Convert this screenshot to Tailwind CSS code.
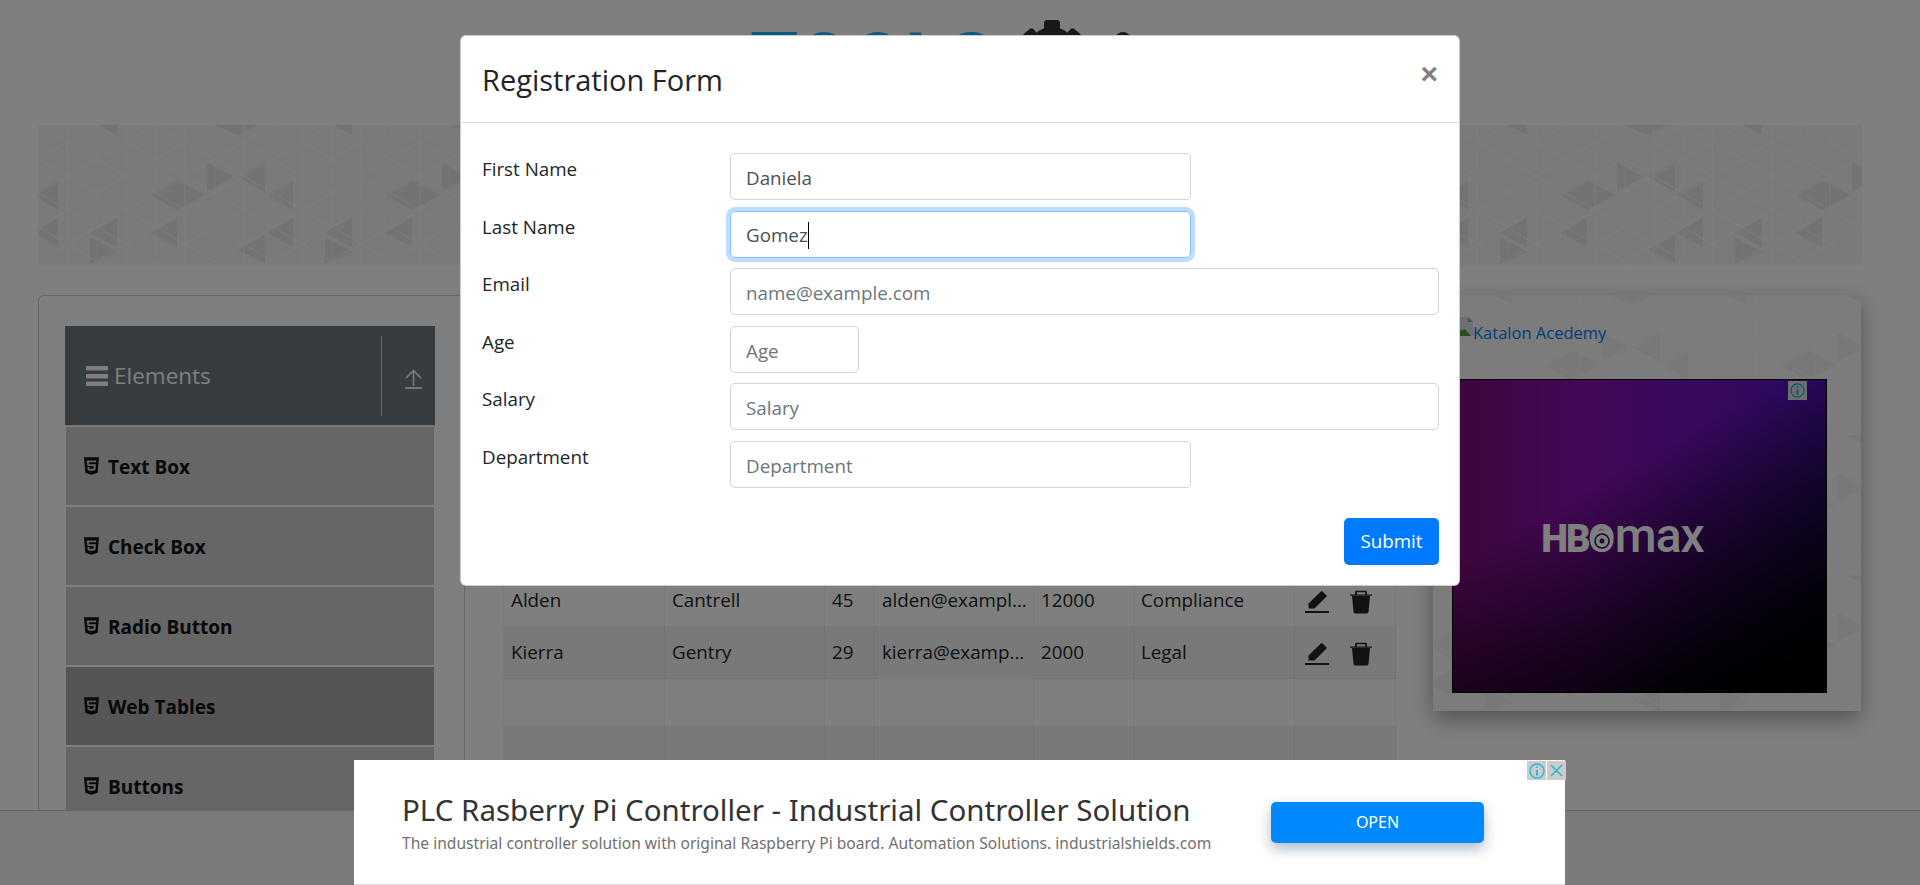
<!DOCTYPE html>
<html lang="en">
<head>
    <meta charset="UTF-8">
    <title>Web Tables - Registration Form</title>
    <script src="https://cdn.jsdelivr.net/npm/@tailwindcss/browser@4"></script>
</head>
<body class="bg-white font-['Open_Sans',sans-serif] text-[#212529]">
<div class="relative w-[1920px] h-[885px] overflow-hidden">

    <!-- shared background pattern -->
    <svg width="0" height="0" class="absolute">
        <defs>
            <pattern id="lattice" width="58.75" height="68" patternUnits="userSpaceOnUse">
                <path d="M0 0L29.4 17L58.75 0M0 34L29.4 17M29.4 51L58.75 34M0 34L29.4 51L58.75 68M29.4 51L0 68M29.4 17L58.75 34M0 0V68M29.4 0V68" fill="none" stroke="#fff" stroke-width="1" stroke-opacity="0.6"/>
            </pattern>
            <pattern id="tile" width="235" height="140" patternUnits="userSpaceOnUse">
                <rect width="235" height="140" fill="#f5f5f5"/>
                <g fill="#e7e7e7">
                    <path d="M112 70L139 55L167 70L139 85Z"/>
                    <path d="M-6 70L20 55V85Z"/>
                    <path d="M229 70L255 55V85Z"/>
                    <path d="M52 108L79 93V122Z"/>
                    <path d="M112 108L139 93V122Z"/>
                    <path d="M-6 108L20 93V122Z"/>
                    <path d="M229 108L255 93V122Z"/>
                    <path d="M52 112L79 127L52 140Z"/>
                    <path d="M169 37L195 52L169 67Z"/>
                    <path d="M200 52L227 37V67Z"/>
                    <path d="M200 125L227 110V138Z"/>
                    <path d="M60 0L79 10V0Z"/>
                    <path d="M175 0L199 10L219 0Z"/>
                </g>
                <rect width="235" height="140" fill="url(#lattice)"/>
            </pattern>
        </defs>
    </svg>

    <!-- logo -->
    <header class="h-[125px] pl-[750px] flex items-start gap-[26px] overflow-hidden">
        <span class="mt-[22px] text-[78px] leading-[80px] font-bold font-['Roboto',sans-serif] text-[#16b4f8]">TOOLS</span>
        <svg class="mt-[20px]" width="62" height="62" viewBox="0 0 62 62" fill="#333">
            <circle cx="31" cy="31" r="24"/>
            <rect x="23" y="0" width="16" height="14" rx="3"/>
            <rect x="4" y="10" width="13" height="14" rx="3" transform="rotate(-40 10 17)"/>
            <rect x="45" y="10" width="13" height="14" rx="3" transform="rotate(40 52 17)"/>
        </svg>
        <span class="mt-[32px] ml-[6px] w-[16px] h-[16px] rounded-full bg-[#333]"></span>
    </header>

    <!-- banner -->
    <svg class="block ml-[38px]" width="1824" height="140"><rect width="1824" height="140" fill="url(#tile)"/></svg>

    <main class="flex mt-[30px] items-start">
        <!-- left menu -->
        <aside class="ml-[38px] w-[427px] h-[600px] border border-[#ccc] rounded-t-[6px] pt-[30px] pl-[26px]">
            <div class="w-[370px] h-[100px] bg-[#6e7880] text-white flex items-center border-b border-[#ddd]">
                <svg class="ml-[21px]" width="22" height="20" viewBox="0 0 22 20" fill="#fff">
                    <rect y="0" width="22" height="4.5" rx="1"/><rect y="8" width="22" height="4.5" rx="1"/><rect y="15.5" width="22" height="4.5" rx="1"/>
                </svg>
                <span class="ml-[6px] text-[22.5px] w-[267px]">Elements</span>
                <div class="h-[80px] border-l border-white/70 flex items-center pl-[22px]">
                    <svg class="mt-[6px]" width="19" height="20" viewBox="0 0 19 20" fill="none" stroke="#fff" stroke-width="1.5">
                        <path d="M9.5 17V1.500M2 9L9.5 1.500L17 9"/><path d="M1 19H18" stroke-width="1.700"/>
                    </svg>
                </div>
            </div>
            <ul class="w-[368px] ml-px mt-px font-bold text-[19px] text-[#111]">
                <li class="h-[78px] mb-[2px] bg-[#ccc] pt-[2px] flex items-center pl-[18px] gap-[9px]"><svg class="w-[15px] h-[20px] -mt-[2px]" viewBox="0 0 384 512" fill="#111"><path d="M0 32l34.9 395.8L191.5 480l157.6-52.2L384 32H0zm308.2 127.9H124.4l4.1 49.4h175.6l-13.6 148.4-97.9 27v.3h-1.1l-98.7-27.3-6-75.8h47.7L138 320l53.5 14.5 53.7-14.5 6-62.2H84.3L71.5 112.2h241.1l-4.4 47.7z"/></svg>Text Box</li>
                <li class="h-[78px] mb-[2px] bg-[#ccc] pt-[2px] flex items-center pl-[18px] gap-[9px]"><svg class="w-[15px] h-[20px] -mt-[2px]" viewBox="0 0 384 512" fill="#111"><path d="M0 32l34.9 395.8L191.5 480l157.6-52.2L384 32H0zm308.2 127.9H124.4l4.1 49.4h175.6l-13.6 148.4-97.9 27v.3h-1.1l-98.7-27.3-6-75.8h47.7L138 320l53.5 14.5 53.7-14.5 6-62.2H84.3L71.5 112.2h241.1l-4.4 47.7z"/></svg>Check Box</li>
                <li class="h-[78px] mb-[2px] bg-[#ccc] pt-[2px] flex items-center pl-[18px] gap-[9px]"><svg class="w-[15px] h-[20px] -mt-[2px]" viewBox="0 0 384 512" fill="#111"><path d="M0 32l34.9 395.8L191.5 480l157.6-52.2L384 32H0zm308.2 127.9H124.4l4.1 49.4h175.6l-13.6 148.4-97.9 27v.3h-1.1l-98.7-27.3-6-75.8h47.7L138 320l53.5 14.5 53.7-14.5 6-62.2H84.3L71.5 112.2h241.1l-4.4 47.7z"/></svg>Radio Button</li>
                <li class="h-[78px] mb-[2px] bg-[#aaa] pt-[2px] flex items-center pl-[18px] gap-[9px]"><svg class="w-[15px] h-[20px] -mt-[2px]" viewBox="0 0 384 512" fill="#111"><path d="M0 32l34.9 395.8L191.5 480l157.6-52.2L384 32H0zm308.2 127.9H124.4l4.1 49.4h175.6l-13.6 148.4-97.9 27v.3h-1.1l-98.7-27.3-6-75.8h47.7L138 320l53.5 14.5 53.7-14.5 6-62.2H84.3L71.5 112.2h241.1l-4.4 47.7z"/></svg>Web Tables</li>
                <li class="h-[78px] mb-[2px] bg-[#ccc] pt-[2px] flex items-center pl-[18px] gap-[9px]"><svg class="w-[15px] h-[20px] -mt-[2px]" viewBox="0 0 384 512" fill="#111"><path d="M0 32l34.9 395.8L191.5 480l157.6-52.2L384 32H0zm308.2 127.9H124.4l4.1 49.4h175.6l-13.6 148.4-97.9 27v.3h-1.1l-98.7-27.3-6-75.8h47.7L138 320l53.5 14.5 53.7-14.5 6-62.2H84.3L71.5 112.2h241.1l-4.4 47.7z"/></svg>Buttons</li>
            </ul>
        </aside>

        <!-- table -->
        <section class="ml-[38px] w-[892px] mt-[175px] text-[18.8px]">
            <table class="w-full table-fixed border-collapse">
                <colgroup>
                    <col class="w-[161px]"><col class="w-[160px]"><col class="w-[50px]"><col class="w-[159px]"><col class="w-[100px]"><col class="w-[161px]"><col class="w-[101px]">
                </colgroup>
                <thead>
                    <tr class="h-[52px] text-left">
                        <th class="px-[7px] border border-black/5 font-semibold">First Name</th>
                        <th class="px-[7px] border border-black/5 font-semibold">Last Name</th>
                        <th class="px-[7px] border border-black/5 font-semibold">Age</th>
                        <th class="px-[7px] border border-black/5 font-semibold">Email</th>
                        <th class="px-[7px] border border-black/5 font-semibold">Salary</th>
                        <th class="px-[7px] border border-black/5 font-semibold">Department</th>
                        <th class="px-[7px] border border-black/5 font-semibold">Action</th>
                    </tr>
                </thead>
                <tbody>
                    <tr class="h-[52px] bg-black/5">
                        <td class="px-[7px] border border-black/5">Cierra</td>
                        <td class="px-[7px] border border-black/5">Vega</td>
                        <td class="px-[7px] border border-black/5">39</td>
                        <td class="px-[7px] border border-black/5 whitespace-nowrap overflow-hidden">cierra@examp...</td>
                        <td class="px-[7px] border border-black/5">10000</td>
                        <td class="px-[7px] border border-black/5">Insurance</td>
                        <td class="px-[7px] border border-black/5"></td>
                    </tr>
                    <tr class="h-[52px]">
                        <td class="px-[7px] border border-black/5">Alden</td>
                        <td class="px-[7px] border border-black/5">Cantrell</td>
                        <td class="px-[7px] border border-black/5">45</td>
                        <td class="px-[7px] border border-black/5 whitespace-nowrap overflow-hidden">alden@exampl...</td>
                        <td class="px-[7px] border border-black/5">12000</td>
                        <td class="px-[7px] border border-black/5">Compliance</td>
                        <td class="pl-[10px] border border-black/5">
                            <div class="flex gap-[21px] mt-[3px]">
                                <svg width="24" height="24" viewBox="0 0 24 24" fill="#212529"><path d="M3.5 13.5L16.7.8L22 6L9.5 18.5H3.5Z"/><rect y="21" width="24" height="2"/></svg>
                                <svg width="22" height="24" viewBox="0 0 22 24" fill="#212529"><path d="M2 6H20L18.5 22Q18.3 23.4 17 23.4H5Q3.700 23.400 3.500 22Z"/><path fill-rule="evenodd" d="M5 4.500V2Q5 .7 6.300 .7H15.700Q17 .7 17 2V4.500H22V5.800H0V4.500ZM6.800 2.200V4.500H15.200V2.200Z"/></svg>
                            </div>
                        </td>
                    </tr>
                    <tr class="h-[52px] bg-black/5">
                        <td class="px-[7px] border border-black/5">Kierra</td>
                        <td class="px-[7px] border border-black/5">Gentry</td>
                        <td class="px-[7px] border border-black/5">29</td>
                        <td class="px-[7px] border border-black/5 whitespace-nowrap overflow-hidden">kierra@examp...</td>
                        <td class="px-[7px] border border-black/5">2000</td>
                        <td class="px-[7px] border border-black/5">Legal</td>
                        <td class="pl-[10px] border border-black/5">
                            <div class="flex gap-[21px] mt-[3px]">
                                <svg width="24" height="24" viewBox="0 0 24 24" fill="#212529"><path d="M3.5 13.5L16.7.8L22 6L9.5 18.5H3.5Z"/><rect y="21" width="24" height="2"/></svg>
                                <svg width="22" height="24" viewBox="0 0 22 24" fill="#212529"><path d="M2 6H20L18.5 22Q18.3 23.4 17 23.4H5Q3.700 23.400 3.500 22Z"/><path fill-rule="evenodd" d="M5 4.500V2Q5 .7 6.300 .7H15.700Q17 .7 17 2V4.500H22V5.800H0V4.500ZM6.800 2.200V4.500H15.200V2.200Z"/></svg>
                            </div>
                        </td>
                    </tr>
                    <tr class="h-[48px]"><td class="border border-black/5"></td><td class="border border-black/5"></td><td class="border border-black/5"></td><td class="border border-black/5"></td><td class="border border-black/5"></td><td class="border border-black/5"></td><td class="border border-black/5"></td></tr>
                    <tr class="h-[48px] bg-black/5"><td class="border border-black/5"></td><td class="border border-black/5"></td><td class="border border-black/5"></td><td class="border border-black/5"></td><td class="border border-black/5"></td><td class="border border-black/5"></td><td class="border border-black/5"></td></tr>
                </tbody>
            </table>
        </section>

        <!-- right ad -->
        <section class="ml-[38px] w-[428px] h-[416px] shadow-[0_8px_20px_rgba(0,0,0,0.35)]">
            <svg class="absolute opacity-60" width="428" height="416"><rect width="428" height="416" fill="url(#tile)"/></svg>
            <div class="relative pl-[26px] pt-[23px] h-[84px]">
                <a class="flex items-start text-[#007bff] text-[16.5px] leading-[30px]" href="#">
                    <svg class="-mt-[1px]" width="14" height="19" viewBox="0 0 14 19"><path d="M0 0H9L14 5V19H0Z" fill="#d8e0ec"/><path d="M9 0V5H14Z" fill="#9aa4b2"/><path d="M0 19V14L6 12L12 19Z" fill="#5c9a3c"/></svg>
                    Katalon Acedemy
                </a>
            </div>
            <div class="relative ml-[19px] w-[375px] h-[314px] border border-black bg-[linear-gradient(150deg,rgba(0,0,0,0)_35%,rgba(0,0,0,0.35)_50%,rgba(0,0,0,0.6)_62%,rgba(0,0,0,0.9)_80%,#000_92%),linear-gradient(90deg,#7a0c78_0%,#8810b0_35%,#5414c4_100%)] flex items-center justify-center">
                <span class="absolute top-[1px] right-[19px] w-[19px] h-[19px] bg-[#ddd] flex items-center justify-center">
                    <svg width="15" height="15" viewBox="0 0 16 16" fill="none" stroke="#00aeef" stroke-width="1.300"><circle cx="8" cy="8" r="7"/><path d="M8 7V12.500M8 3.500V5" stroke-width="1.800"/></svg>
                </span>
                <span class="mr-[34px] -mt-[1px] flex items-baseline text-white leading-none whitespace-nowrap font-['Roboto',sans-serif]">
                    <span class="text-[38px] font-black tracking-[-2px]">HB</span>
                    <span class="relative text-[38px] font-black">O
                        <svg class="absolute left-[2px] top-[10px]" width="22" height="22" viewBox="0 0 22 22"><circle cx="11" cy="11" r="11" fill="#fff"/><circle cx="11" cy="11" r="7" fill="none" stroke="#2a0a60" stroke-width="1.500"/><circle cx="11" cy="11" r="2.500" fill="#2a0a60"/></svg>
                    </span>
                    <span class="text-[48px] font-medium tracking-[-1px]">max</span>
                </span>
            </div>
        </section>
    </main>

    <!-- footer -->
    <footer class="absolute left-0 right-0 top-[810px] h-[75px] bg-[#f4f4f4] border-t border-[#ccc]"></footer>

    <!-- backdrop -->
    <div class="absolute inset-0 bg-black/50"></div>

    <!-- modal -->
    <div class="absolute left-[460px] top-[35px] w-[1000px] h-[551px] bg-white border border-black/20 rounded-[6px]">
        <div class="h-[87px] border-b border-[#dee2e6] flex items-start justify-between pl-[21px] pr-[20px]">
            <h2 class="mt-[24px] text-[29px] leading-[40px] font-medium">Registration Form</h2>
            <button class="mt-[18px] text-[#808080] text-[30px] leading-[40px] font-bold font-['Liberation_Sans',sans-serif] pr-[1px]">×</button>
        </div>
        <form class="pt-[30px] pl-[21px] pr-[20px] text-[18.8px]">
            <div class="flex flex-col gap-[10.5px]">
                <div class="flex h-[47px]">
                    <label class="w-[248px] pt-[2px]">First Name</label>
                    <input class="w-[461px] h-[47px] border border-[#ced4da] rounded-[5px] px-[15px] pt-[3px] text-[#495057]" value="Daniela">
                </div>
                <div class="flex h-[47px]">
                    <label class="w-[248px] pt-[2px]">Last Name</label>
                    <div class="w-[461px] h-[47px] border border-[#80bdff] rounded-[5px] px-[15px] pt-[3px] text-[#495057] shadow-[0_0_0_4px_rgba(0,123,255,0.25)] flex items-center">Gomez<span class="w-px h-[27px] bg-black"></span></div>
                </div>
                <div class="flex h-[47px]">
                    <label class="w-[248px] pt-[2px]">Email</label>
                    <input class="flex-1 h-[47px] border border-[#ced4da] rounded-[5px] px-[15px] pt-[3px] placeholder:text-[#6c757d]" placeholder="name@example.com">
                </div>
                <div class="flex h-[47px]">
                    <label class="w-[248px] pt-[2px]">Age</label>
                    <input class="w-[129px] h-[47px] border border-[#ced4da] rounded-[5px] px-[15px] pt-[3px] placeholder:text-[#6c757d]" placeholder="Age">
                </div>
                <div class="flex h-[47px]">
                    <label class="w-[248px] pt-[2px]">Salary</label>
                    <input class="flex-1 h-[47px] border border-[#ced4da] rounded-[5px] px-[15px] pt-[3px] placeholder:text-[#6c757d]" placeholder="Salary">
                </div>
                <div class="flex h-[47px]">
                    <label class="w-[248px] pt-[2px]">Department</label>
                    <input class="w-[461px] h-[47px] border border-[#ced4da] rounded-[5px] px-[15px] pt-[3px] placeholder:text-[#6c757d]" placeholder="Department">
                </div>
            </div>
            <div class="flex justify-end mt-[30px]">
                <button type="button" class="w-[95px] h-[47px] bg-[#007bff] text-white rounded-[5px]">Submit</button>
            </div>
        </form>
    </div>

    <!-- bottom ad -->
    <div class="absolute left-[354px] top-[760px] w-[1211px] h-[125px] bg-white border-b border-[#ddd] flex items-start">
        <div class="ml-[48px] mt-[30px] w-[869px]">
            <p class="text-[29.5px] leading-[40px] text-[#333] font-['Noto_Sans',sans-serif] whitespace-nowrap">PLC Rasberry Pi Controller - Industrial Controller Solution</p>
            <p class="mt-[2px] text-[15.6px] leading-[22px] text-[#707070] font-['Noto_Sans',sans-serif] whitespace-nowrap">The industrial controller solution with original Raspberry Pi board. Automation Solutions. industrialshields.com</p>
        </div>
        <button class="mt-[42px] w-[213px] h-[41px] pb-[2px] bg-[#0088ff] text-white text-[16px] font-['Noto_Sans',sans-serif] rounded-[5px] shadow-[0_6px_14px_rgba(60,80,120,0.4)]">OPEN</button>
        <div class="absolute top-[1px] -right-[1px] flex gap-px">
            <span class="w-[19px] h-[19px] bg-[#ccc] flex items-center justify-center">
                <svg width="16" height="16" viewBox="0 0 16 16" fill="none" stroke="#22b8d8" stroke-width="1.400"><circle cx="8" cy="8" r="7"/><path d="M8 7V12.500M8 3.500V5" stroke-width="1.800"/></svg>
            </span>
            <span class="w-[19px] h-[19px] bg-[#ccc] flex items-center justify-center">
                <svg width="15" height="15" viewBox="0 0 15 15" fill="none" stroke="#22b8d8" stroke-width="1.600"><path d="M2 2L13 13M13 2L2 13"/></svg>
            </span>
        </div>
    </div>
</div>
</body>
</html>
